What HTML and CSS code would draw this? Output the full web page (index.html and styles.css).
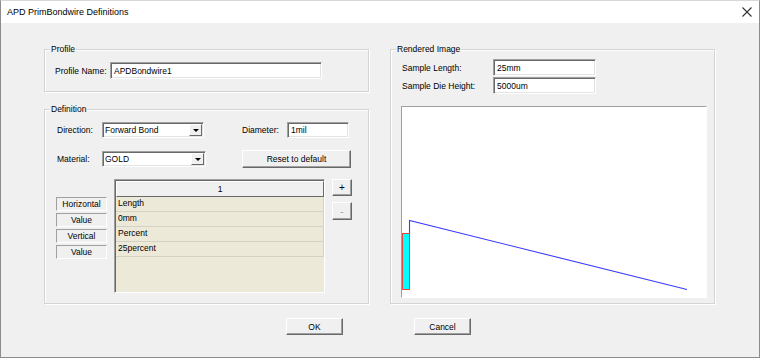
FILE: index.html
```html
<!DOCTYPE html>
<html lang="en">
<head>
    <meta charset="UTF-8">
    <title>APD PrimBondwire Definitions</title>
    <link rel="stylesheet" href="styles.css">
</head>
<body>
    <div class="window">
        <div class="titlebar">
            <span class="title">APD PrimBondwire Definitions</span>
            <svg class="close" width="10" height="10" viewBox="0 0 10 10">
                <path d="M0.5 0.5 L9.5 9.5 M9.5 0.5 L0.5 9.5" stroke="#333" stroke-width="1.1" fill="none"/>
            </svg>
        </div>

        <div class="content">
            <div class="columns">
                <div class="col-left">
                    <div class="group profile">
                        <span class="group-title">Profile</span>
                        <div class="row">
                            <label class="lbl lbl-profile">Profile Name:</label>
                            <div class="field field-profile">APDBondwire1</div>
                        </div>
                    </div>

                    <div class="group definition">
                        <span class="group-title">Definition</span>
                        <div class="row">
                            <label class="lbl lbl-def">Direction:</label>
                            <div class="combo combo-dir">
                                <span>Forward Bond</span>
                                <span class="combo-btn"><span class="arrow"></span></span>
                            </div>
                            <label class="lbl lbl-def lbl-diam">Diameter:</label>
                            <div class="field field-diam">1mil</div>
                        </div>
                        <div class="row row-material">
                            <label class="lbl lbl-def">Material:</label>
                            <div class="combo combo-mat">
                                <span>GOLD</span>
                                <span class="combo-btn"><span class="arrow"></span></span>
                            </div>
                            <button class="btn btn-reset">Reset to default</button>
                        </div>

                        <div class="table-area">
                            <div class="row-heads">
                                <div class="row-head">Horizontal</div>
                                <div class="row-head">Value</div>
                                <div class="row-head">Vertical</div>
                                <div class="row-head">Value</div>
                            </div>
                            <div class="grid">
                                <div class="grid-head">1</div>
                                <div class="grid-cell">Length</div>
                                <div class="grid-cell">0mm</div>
                                <div class="grid-cell">Percent</div>
                                <div class="grid-cell">25percent</div>
                            </div>
                            <div class="grid-tools">
                                <button class="btn btn-small">+</button>
                                <button class="btn btn-small btn-disabled">-</button>
                            </div>
                        </div>
                    </div>
                </div>

                <div class="group rendered">
                    <span class="group-title">Rendered Image</span>
                    <div class="row">
                        <label class="lbl lbl-sample">Sample Length:</label>
                        <div class="field field-sample">25mm</div>
                    </div>
                    <div class="row row-tight">
                        <label class="lbl lbl-sample">Sample Die Height:</label>
                        <div class="field field-sample">5000um</div>
                    </div>
                    <div class="canvas">
                        <svg width="305" height="191" viewBox="0 0 305 191">
                            <rect x="0" y="126" width="8" height="57" fill="#e04848"/>
                            <rect x="1" y="127" width="6" height="55" fill="#00ffff"/>
                            <polyline points="7.5,126 7.5,113.5 285,182.5" fill="none" stroke="#3c3cff" stroke-width="1.1"/>
                        </svg>
                    </div>
                </div>
            </div>

            <div class="actions">
                <button class="btn btn-action">OK</button>
                <button class="btn btn-action">Cancel</button>
            </div>
        </div>
    </div>
</body>
</html>
```

FILE: styles.css
```css
body {
    margin: 0;
    font-family: "Liberation Sans", Arial, sans-serif;
    font-size: 8.5px;
    color: #000;
    background: #f0f0f0;
}
.window {
    width: 760px;
    height: 358px;
    box-sizing: border-box;
    border: 1px solid #8c8c8c;
    border-top-color: #d8d8d8;
    background: #f0f0f0;
    display: flex;
    flex-direction: column;
}
.titlebar {
    height: 22px;
    background: #fff;
    display: flex;
    align-items: center;
    justify-content: space-between;
    padding: 0 6px 0 6px;
}
.title {
    font-size: 9px;
    color: #000;
}
.close {
    margin-right: 1px;
}
.content {
    padding: 26px 0 0 43px;
}
.columns {
    display: flex;
    gap: 21px;
}
.col-left {
    width: 325px;
    display: flex;
    flex-direction: column;
    gap: 17px;
}
.group {
    position: relative;
    box-sizing: border-box;
    border: 1px solid #d4d4d4;
    box-shadow: inset 1px 1px 0 #fff, 1px 1px 0 #fff;
}
.group-title {
    position: absolute;
    top: -6px;
    left: 5px;
    padding: 0 1px;
    background: #f0f0f0;
    line-height: 10px;
}
.row {
    display: flex;
    align-items: center;
}
.lbl {
    flex: none;
}
.field, .combo {
    box-sizing: border-box;
    background: #fff;
    border: 1px solid;
    border-color: #a0a0a0 #fff #fff #a0a0a0;
    box-shadow: inset 1px 1px 0 #696969, inset -1px -1px 0 #e3e3e3;
    display: flex;
    align-items: center;
    padding-left: 3px;
}

/* profile */
.profile {
    height: 43px;
    padding: 12px 0 0 10px;
}
.lbl-profile {
    width: 55px;
}
.field-profile {
    width: 212px;
    height: 17px;
}

/* definition */
.definition {
    height: 195px;
    padding: 12px 0 0 12px;
}
.lbl-def {
    width: 45px;
}
.combo {
    height: 16px;
    justify-content: space-between;
    padding-left: 2px;
}
.combo-dir {
    width: 102px;
}
.combo-mat {
    width: 104px;
}
.combo-btn {
    width: 13px;
    height: 12px;
    margin-right: 1px;
    box-sizing: border-box;
    background: #f0f0f0;
    border: 1px solid;
    border-color: #fff #696969 #696969 #fff;
    display: flex;
    align-items: center;
    justify-content: center;
}
.arrow {
    width: 0;
    height: 0;
    border-left: 3px solid transparent;
    border-right: 3px solid transparent;
    border-top: 3px solid #000;
}
.lbl-diam {
    margin-left: 38px;
}
.field-diam {
    width: 62px;
    height: 16px;
}
.row-material {
    margin-top: 12px;
}
.btn {
    font-family: inherit;
    font-size: 8.5px;
    color: #000;
    background: #f0f0f0;
    box-sizing: border-box;
    border: 1px solid;
    border-color: #fff #696969 #696969 #fff;
    box-shadow: inset -1px -1px 0 #a0a0a0;
    padding: 0;
}
.btn-reset {
    width: 109px;
    height: 18px;
    margin-left: 36px;
}

.table-area {
    display: flex;
    margin-top: 11px;
    margin-left: -1px;
}
.row-heads {
    width: 51px;
    padding-top: 18px;
    display: flex;
    flex-direction: column;
    gap: 2px;
}
.row-head {
    height: 14px;
    box-sizing: border-box;
    border: 1px solid;
    border-color: #a0a0a0 #fff #fff #a0a0a0;
    text-align: center;
    line-height: 12px;
}
.grid {
    margin-left: 7px;
    width: 211px;
    height: 114px;
    box-sizing: border-box;
    background: #ece9d8;
    border: 1px solid;
    border-color: #a0a0a0 #fff #fff #a0a0a0;
    box-shadow: inset 1px 1px 0 #696969;
    display: flex;
    flex-direction: column;
}
.grid-head {
    height: 16px;
    box-sizing: border-box;
    background: #f0f0f0;
    border: 1px solid;
    border-color: #fff #696969 #696969 #fff;
    margin: 1px 0 0 1px;
    text-align: center;
    line-height: 14px;
    flex: none;
}
.grid-cell {
    height: 15px;
    box-sizing: border-box;
    border-bottom: 1px solid #d4d2c4;
    border-right: 1px solid #d4d2c4;
    padding-left: 2px;
    line-height: 12px;
    margin-left: 1px;
    flex: none;
}
.grid-tools {
    margin-left: 7px;
    display: flex;
    flex-direction: column;
    gap: 6px;
}
.btn-small {
    width: 20px;
    height: 17px;
    font-size: 10px;
    line-height: 13px;
}
.btn-disabled {
    color: #a0a0a0;
    height: 18px;
}

/* rendered image */
.rendered {
    width: 325px;
    height: 255px;
    padding: 9px 0 0 11px;
}
.lbl-sample {
    width: 91px;
}
.field-sample {
    width: 103px;
    height: 17px;
}
.row-tight {
    margin-top: 1px;
}
.canvas {
    margin: 12px 0 0 -1px;
    width: 306px;
    height: 192px;
    box-sizing: border-box;
    background: #fff;
    border: 1px solid;
    border-color: #a0a0a0 #fff #fff #a0a0a0;
}
.canvas svg {
    display: block;
}

.actions {
    display: flex;
    gap: 71px;
    margin-top: 14px;
    padding-left: 242px;
}
.btn-action {
    width: 57px;
    height: 17px;
}
```
